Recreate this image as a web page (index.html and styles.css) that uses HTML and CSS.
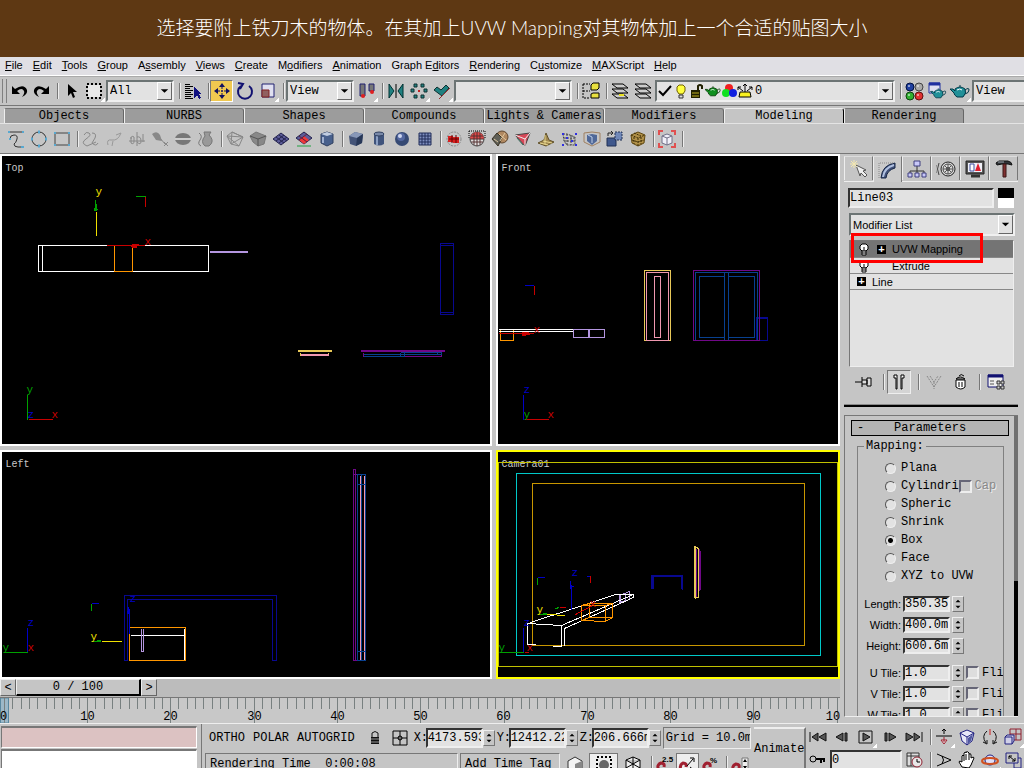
FILE: index.html
```
<!DOCTYPE html>
<html lang="zh-CN">
<head>
    <meta charset="UTF-8">
    <meta name="viewport" content="width=device-width, initial-scale=1.0">
    <title>UVW Mapping</title>
    <link rel="stylesheet" href="styles.css">
</head>
<body>
    <!-- shared symbols -->
    <svg class="defs" width="0" height="0" aria-hidden="true">
        <defs>
            <symbol id="spin" viewBox="0 0 12 16"><path d="M3 6h6L6 3zM3 10h6l-3 3z" fill="#000"/></symbol>
            <symbol id="down" viewBox="0 0 14 14"><path d="M3 5h8l-4 4z" fill="#000"/></symbol>
            <symbol id="bulb" viewBox="0 0 14 14"><path d="M5 9L3 7V4l2-2h4l2 2v3L9 9z" fill="#fff" stroke="#000"/><path d="M5 9h4v4H5zM5 11h4M7 5v3" fill="#fff" stroke="#000"/></symbol>
            <symbol id="teapot" viewBox="0 0 20 20"><path d="M5 8Q10 4 15 8q2 4-2 8H7Q4 14 4 12L0 8h3l2 2z"/><path d="M15 9q4-3 4 0t-4 4M9 5h2" fill="none"/><path d="M7 9q3-2 5 0" stroke="#fff" fill="none"/></symbol>
            <symbol id="knot" viewBox="0 0 20 20"><path d="M3 6q2-4 5-2t-3 6 1 7l9-4M11 4q5 0 3 5l-3 5q4 4 6 0" fill="none"/></symbol>
            <g id="ticks"><path d="M0 0v25M8 0v11M17 0v11M25 0v11M33 0v11M42 0v11M50 0v11M58 0v11M67 0v11M75 0v11"/></g>
        </defs>
    </svg>

    <header class="banner">
        <h1>选择要附上铁刀木的物体。在其加上UVW Mapping对其物体加上一个合适的贴图大小</h1>
    </header>

    <nav class="menubar">
        <a href="#"><u>F</u>ile</a>
        <a href="#"><u>E</u>dit</a>
        <a href="#"><u>T</u>ools</a>
        <a href="#"><u>G</u>roup</a>
        <a href="#">A<u>s</u>sembly</a>
        <a href="#"><u>V</u>iews</a>
        <a href="#"><u>C</u>reate</a>
        <a href="#">M<u>o</u>difiers</a>
        <a href="#"><u>A</u>nimation</a>
        <a href="#">Graph E<u>d</u>itors</a>
        <a href="#"><u>R</u>endering</a>
        <a href="#">C<u>u</u>stomize</a>
        <a href="#"><u>M</u>AXScript</a>
        <a href="#"><u>H</u>elp</a>
    </nav>

    <!-- main toolbar -->
    <div class="toolbar">
        <i class="grip"></i>
        <button class="tool" aria-label="Undo"><svg viewBox="0 0 20 20"><path d="M3 5v8h8l-3-3q5-4 7 0 1 2-2 6 6-3 5-7-3-7-12-1z"/></svg></button>
        <button class="tool" aria-label="Redo"><svg viewBox="0 0 20 20"><path d="M17 5v8H9l3-3q-5-4-7 0-1 2 2 6-6-3-5-7 3-7 12-1z"/></svg></button>
        <i class="sep"></i>
        <button class="tool" aria-label="Select"><svg viewBox="0 0 20 20"><path d="M7 3v12l3-3 2 5 2-1-2-5h4z"/></svg></button>
        <button class="tool fly" aria-label="Region"><svg viewBox="0 0 20 20"><path d="M4 4h12v12H4z" fill="#e8e8e8"/><path d="M3 3h14v14H3z" fill="none" stroke="#000" stroke-width="2" stroke-dasharray="2 2"/></svg></button>
        <span class="drop short"><select aria-label="Filter"><option>All</option></select><svg><use href="#down"/></svg></span>
        <i class="sep"></i>
        <button class="tool" aria-label="Select by name"><svg viewBox="0 0 20 20" shape-rendering="crispEdges"><path d="M2 3h5M2 5h8M2 7h5M2 9h8M2 11h6M2 13h8M2 15h6M2 17h8" stroke="#000"/><path d="M11 6v11l3-3 2 4 2-1-2-4h3z" fill="#101080"/></svg></button>
        <i class="sep"></i>
        <button class="tool on" aria-label="Move"><svg viewBox="0 0 20 20"><path d="M10 2l3 4H7zM10 18l3-4H7zM2 10l4-3v6zM18 10l-4-3v6z" fill="#101060"/><path d="M10 6v8M6 10h8" stroke="#101060" stroke-dasharray="2 1"/></svg></button>
        <button class="tool" aria-label="Rotate"><svg viewBox="0 0 20 20"><path d="M6 5a7 7 0 1 0 8 0M3 2l5 1-3 5" fill="none" stroke="#101070" stroke-width="2"/></svg></button>
        <button class="tool fly" aria-label="Scale"><svg viewBox="0 0 20 20"><path d="M4 3h12v13H4z" fill="#e0e0f0" stroke="#202070"/><path d="M4 9h7v7H4z" fill="#906060" stroke="#802020"/></svg></button>
        <i class="sep"></i>
        <span class="drop short"><select aria-label="Reference coordinate system"><option>View</option></select><svg><use href="#down"/></svg></span>
        <button class="tool fly" aria-label="Pivot"><svg viewBox="0 0 20 20"><path d="M3 3h5v12H3zM12 3h5v7h-5z" fill="#777" stroke="#202070"/><circle cx="6" cy="15" r="2" fill="#e02020"/><circle cx="15" cy="11" r="2" fill="#e02020"/></svg></button>
        <i class="sep"></i>
        <button class="tool" aria-label="Mirror"><svg viewBox="0 0 20 20"><path d="M3 3v14l5-7zM17 3v14l-5-7z" fill="#208080" stroke="#003030"/><path d="M10 3v14" stroke="#000"/></svg></button>
        <button class="tool fly" aria-label="Array"><svg viewBox="0 0 20 20" fill="#208080" stroke="#103030"><path d="M5 3h3v3H5zM12 3h3v3h-3zM2 8h3v3H2zM15 8h3v3h-3zM5 14h3v3H5zM12 14h3v3h-3z"/><path d="M9 9h2v2H9z" fill="#c02020" stroke="none"/></svg></button>
        <button class="tool fly" aria-label="Align"><svg viewBox="0 0 20 20"><path d="M2 9l3-3 4 3 5-5 3 3-7 8z" fill="#208080" stroke="#103030"/><path d="M7 18L18 7" stroke="#903030"/></svg></button>
        <span class="drop sets"><select aria-label="Selection sets"><option></option></select><svg><use href="#down"/></svg></span>
        <i class="sep"></i>
        <button class="tool" aria-label="Named sets"><svg viewBox="0 0 20 20"><path d="M2 3v14h7M2 3h7M2 10h7" fill="none" stroke="#000" stroke-dasharray="2 1"/><path d="M10 4l2-2h6v5l-2 2h-6zM10 13l2-1h6v5h-8z" fill="#e8e040" stroke="#000"/></svg></button>
        <i class="sep"></i>
        <button class="tool" aria-label="Layer manager"><svg viewBox="0 0 20 20"><path d="M2 13h11l5 4H7zM2 8h11l5 4H7zM2 3h11l5 4H7z" fill="#ccc" stroke="#000"/><path d="M9 14h5" stroke="#e8e020" stroke-width="2"/></svg></button>
        <button class="tool" aria-label="Layers"><svg viewBox="0 0 20 20"><path d="M2 13h11l5 4H7zM2 8h11l5 4H7zM2 3h11l5 4H7z" fill="#ccc" stroke="#000"/></svg></button>
        <span class="drop layers">
            <svg class="mini" viewBox="0 0 16 16"><path d="M2 8l4 4 8-9" fill="none" stroke="#000" stroke-width="2"/></svg>
            <svg class="mini" viewBox="0 0 16 16"><path d="M6 11L4 8V4l2-2h4l2 2v4l-2 3z" fill="#ffff40" stroke="#706000"/><path d="M6 12h4v3H6z" fill="#ddd" stroke="#333"/></svg>
            <svg class="mini" viewBox="0 0 16 16"><path d="M2 7h9v8H2z" fill="#202000"/><path d="M9 7V3q2-2 4 0v3" fill="none" stroke="#202000" stroke-width="2"/><path d="M3 10h7M3 13h7" stroke="#c0b020"/></svg>
            <svg class="mini" viewBox="0 0 20 20" fill="#109020" stroke="#003800"><use href="#teapot"/></svg>
            <svg class="mini" viewBox="0 0 16 16"><circle cx="8" cy="5" r="4" fill="#f02020"/><circle cx="5" cy="10" r="4" fill="#10e020"/><circle cx="12" cy="10" r="4" fill="#1020e0"/></svg>
            <svg class="mini" viewBox="0 0 16 16"><path d="M3 9h10l1 5H2z" fill="#f8f020" stroke="#000"/><path d="M8 9V1M6 3l2-2 2 2M6 8L1 4M1 7V4h3M10 8l5-4M15 7V4h-3" fill="none" stroke="#000"/></svg>
            <select aria-label="Layer"><option>0</option></select>
            <svg><use href="#down"/></svg>
        </span>
        <i class="sep"></i>
        <button class="tool" aria-label="Materials"><svg viewBox="0 0 20 20"><circle cx="6" cy="6" r="4" fill="#2040a0" stroke="#001040"/><circle cx="15" cy="6" r="4" fill="#aaa" stroke="#444"/><circle cx="6" cy="15" r="4" fill="#30b030" stroke="#104010"/><circle cx="15" cy="15" r="4" fill="#e03030" stroke="#601010"/><path d="M4 5h2M13 5h2M4 14h2M13 14h2" stroke="#fff"/></svg></button>
        <button class="tool" aria-label="Render scene"><svg viewBox="0 0 20 20"><path d="M2 2h11v10H2z" fill="#e0e0f0" stroke="#2030a0"/><path d="M2 3h11" stroke="#2030a0" stroke-width="3"/><g fill="#209098" stroke="#003848"><use href="#teapot" x="3" y="4" width="17" height="16"/></g></svg></button>
        <button class="tool fly" aria-label="Quick render"><svg viewBox="0 0 20 20" fill="#209098" stroke="#003848"><use href="#teapot"/></svg></button>
        <span class="drop cut"><select aria-label="Render type"><option>View</option></select></span>
    </div>

    <!-- tab panel -->
    <div class="tabs">
        <button>Objects</button><button>NURBS</button><button>Shapes</button><button>Compounds</button><button>Lights &amp; Cameras</button><button>Modifiers</button><button class="active">Modeling</button><button>Rendering</button>
    </div>
    <div class="tools">
        <button class="tool" aria-label="Line"><svg viewBox="0 0 20 20"><path d="M3 3h14M4 10q0-4 4-4t3 4-3 5q0 3 4 3h4" fill="none" stroke="#333"/><path d="M2 3h2M16 3h2M15 18h3M3 10h2" stroke="#58a8d0" stroke-width="2"/></svg></button>
        <button class="tool" aria-label="Circle"><svg viewBox="0 0 20 20"><circle cx="10" cy="10" r="7" fill="none" stroke="#333"/><path d="M9 3h2M9 17h2M2 10h2M16 10h2" stroke="#58a8d0" stroke-width="3"/></svg></button>
        <button class="tool" aria-label="Rectangle"><svg viewBox="0 0 20 20"><path d="M3 4h14v12H3z" fill="none" stroke="#444"/><path d="M2 4h2M16 4h2M2 16h2M16 16h2" stroke="#58a8d0" stroke-width="2"/></svg></button>
        <i class="sep"></i>
        <button class="tool" aria-label="Edit spline"><svg viewBox="0 0 20 20" stroke="#888"><use href="#knot"/></svg></button>
        <button class="tool" aria-label="Sweep"><svg viewBox="0 0 20 20"><path d="M4 16q-2-6 4-5t9-7l-5 2M9 12l-1 5" fill="none" stroke="#999"/></svg></button>
        <button class="tool" aria-label="Cross section"><svg viewBox="0 0 20 20"><path d="M4 8v6q3 2 3-2V8q-3-2-3 2M10 3v14M10 8q4-1 4 4t-4 1M16 5v8M2 12h16" fill="none" stroke="#888"/></svg></button>
        <button class="tool" aria-label="Extrude"><svg viewBox="0 0 20 20"><path d="M2 5q5-4 8 1l2 6-6-1z" fill="#888"/><path d="M10 9l5 6M14 13l4 4M18 13l-4 4" stroke="#888"/></svg></button>
        <button class="tool" aria-label="Capsule"><svg viewBox="0 0 20 20"><ellipse cx="10" cy="10" rx="8" ry="6" fill="#777"/><path d="M2 10h16" stroke="#ccc" stroke-width="2"/></svg></button>
        <button class="tool" aria-label="Lathe"><svg viewBox="0 0 20 20"><path d="M8 3h7l-2 3q5 5 2 9l-2 2H9q-5-4 0-10z" fill="#999" stroke="#777"/><path d="M3 4q4 3 1 7t1 6" fill="none" stroke="#777"/></svg></button>
        <i class="sep"></i>
        <button class="tool" aria-label="Edit mesh"><svg viewBox="0 0 20 20"><path d="M2 7l5-4 11 5-4 9-8-2zM2 7l12 10M7 3L6 15 18 8zM2 7l16 1" fill="none" stroke="#888"/></svg></button>
        <button class="tool" aria-label="Edit poly"><svg viewBox="0 0 20 20"><path d="M2 7l6-4 10 4-2 8-6 2-5-4z" fill="#888" stroke="#777"/><path d="M2 7l8 3 8-3M10 10v7" stroke="#555" fill="none"/></svg></button>
        <button class="tool" aria-label="Edit patch"><svg viewBox="0 0 20 20"><path d="M2 10l8-6 8 6-8 6z" fill="#5c5c98" stroke="#22224c"/><path d="M5 8l8 6M8 6l8 6M5 12l8-6M8 14l8-6" stroke="#22224c"/></svg></button>
        <button class="tool" aria-label="Patch select"><svg viewBox="0 0 20 20"><path d="M2 9l8-6 8 6-8 6z" fill="#5c5c98" stroke="#22224c"/><path d="M10 7l5 4-5 4-5-4z" fill="#f03838"/><path d="M5 7l8 6M5 11l8-6" stroke="#602040"/><path d="M3 17h14" stroke="#20a040"/></svg></button>
        <button class="tool" aria-label="Surface"><svg viewBox="0 0 20 20"><path d="M4 5l6-2 6 2v9l-6 3-6-3z" fill="#48608c" stroke="#304060"/><path d="M4 5l6 2 6-2-6-2z" fill="#c0cce0"/><path d="M6 8v6" stroke="#a0b0d0" stroke-width="2"/></svg></button>
        <i class="sep"></i>
        <button class="tool" aria-label="Box"><svg viewBox="0 0 20 20"><path d="M3 7l6-4 8 2-1 9-6 3-6-2z" fill="#445478"/><path d="M3 7l6-4 8 2-6 4z" fill="#8898b8"/><path d="M11 9l-1 8 6-3 1-9z" fill="#283858"/></svg></button>
        <button class="tool" aria-label="Cylinder"><svg viewBox="0 0 20 20"><path d="M5 5v10q5 3 10 0V5z" fill="#40547c"/><path d="M8 6v10" stroke="#8ca0c4" stroke-width="2"/><ellipse cx="10" cy="5" rx="5" ry="2" fill="#7888a8" stroke="#304060"/></svg></button>
        <button class="tool" aria-label="Sphere"><svg viewBox="0 0 20 20"><circle cx="10" cy="10" r="7" fill="#364a74"/><circle cx="9" cy="8" r="4" fill="#5468a0"/><circle cx="8" cy="7" r="2" fill="#d0d8f0"/></svg></button>
        <button class="tool" aria-label="Plane"><svg viewBox="0 0 20 20"><path d="M4 4h12v12H4z" fill="#8090c0"/><path d="M4 4h12v12H4zM7 4v12M10 4v12M13 4v12M4 7h12M4 10h12M4 13h12" fill="none" stroke="#202c58"/></svg></button>
        <i class="sep"></i>
        <button class="tool" aria-label="MeshSmooth"><svg viewBox="0 0 20 20"><circle cx="10" cy="10" r="7" fill="none" stroke="#888" stroke-dasharray="2 1"/><path d="M4 7h5v1h6v6H9v-1H4z" fill="#d82020"/><path d="M5 10h10M8 6v8M12 6v8" stroke="#600"/></svg></button>
        <button class="tool" aria-label="Slice"><svg viewBox="0 0 20 20"><circle cx="10" cy="10" r="7" fill="#ddd" stroke="#444"/><path d="M3 10a7 7 0 0 1 14 0z" fill="#e04848"/><path d="M4 7h12M3 10h14M4 13h12M7 4v12M10 3v14M13 4v12" stroke="#543030"/><path d="M2 2h16M2 2v7M18 2v7" stroke="#000" stroke-dasharray="1 1"/></svg></button>
        <button class="tool" aria-label="Tessellate"><svg viewBox="0 0 20 20"><circle cx="12" cy="8" r="6" fill="#b08860" stroke="#604830"/><path d="M2 10l5-6 5 5-4 8z" fill="#606058" stroke="#383020"/><path d="M4 10l4 3M9 5l7 6M15 4l-5 8" stroke="#e0c8a0"/></svg></button>
        <button class="tool" aria-label="Face extrude"><svg viewBox="0 0 20 20"><path d="M2 6l15-2-5 13z" fill="#d84858" stroke="#444"/><path d="M2 6l10 4 5-6M12 10v7" fill="none" stroke="#eee"/><path d="M4 9l6 7" stroke="#407060"/></svg></button>
        <button class="tool" aria-label="Displace"><svg viewBox="0 0 20 20"><path d="M2 14l6-3 2-7 3 7 5 2-8 4z" fill="#a08850" stroke="#605028"/><path d="M4 14l8 2M9 6v9M7 12l9 2" stroke="#e8d890"/></svg></button>
        <button class="tool" aria-label="Vertices"><svg viewBox="0 0 20 20"><path d="M4 5h4l8 3v8H8L5 12zM8 5v11M12 6v10M5 12h11M5 9h11" fill="none" stroke="#444" stroke-dasharray="2 1"/><path d="M3 5h2M7 9h2M12 12h2M16 16h2M3 16h2M16 5h2" stroke="#3030e0" stroke-width="2"/></svg></button>
        <button class="tool" aria-label="FFD"><svg viewBox="0 0 20 20"><path d="M2 4l8-1 8 1v9l-8 4-8-4z" fill="none" stroke="#a08060"/><path d="M5 6l5-1 5 1v6l-5 4-5-4z" fill="#506898"/><path d="M6 6l4 2v6" fill="none" stroke="#c0d0e8"/></svg></button>
        <button class="tool" aria-label="Clone"><svg viewBox="0 0 20 20"><path d="M2 9h9v8H2z" fill="#40588c" stroke="#203054"/><path d="M10 3h7v8h-7z" fill="#7088b8" stroke="#203054" stroke-dasharray="2 1"/><path d="M3 7V4h5M6 2l2 2-2 2" fill="none" stroke="#222"/></svg></button>
        <button class="tool" aria-label="Lattice"><svg viewBox="0 0 20 20"><path d="M3 6l7-3 7 3-1 8-6 3-6-3z" fill="#b09048" stroke="#604810"/><path d="M3 6l7 3 7-3M10 9v8M6 4l7 3M6 8v7M13 8v7M4 11l6 2 6-2" fill="none" stroke="#403008" stroke-dasharray="2 1"/></svg></button>
        <i class="sep"></i>
        <button class="tool" aria-label="UVW"><svg viewBox="0 0 20 20"><path d="M5 7l5-2 5 2v7l-5 2-5-2z" fill="#f0f0f8" stroke="#707088"/><path d="M5 7l5 2 5-2M10 9v7" fill="none" stroke="#707088"/><path d="M2 6V2h4M14 2h4v4M2 14v4h4M14 18h4v-4" fill="none" stroke="#e05050" stroke-width="2"/></svg></button>
        <i class="sep"></i>
    </div>

    <div class="workspace">
        <div class="left">
            <main class="views">
                <svg class="view" viewBox="1.5 -0.5 488 288" preserveAspectRatio="xMinYMin meet">
                    <text class="name" x="5" y="14">Top</text>
                    <path class="white" d="M38 89H208V115H38zM42 89V115"/>
                    <path class="orange" d="M114 89V115H132V89"/>
                    <path class="red" d="M106 89H144M131 88h7v1h-7v1h5v1h-5"/>
                    <path class="yellow" d="M96 55V79"/>
                    <path class="green" d="M95 43v11M96 47v7M94 51v3M93 53h4M135 40h10"/>
                    <path class="red" d="M145 40V50"/>
                    <path class="lilac" d="M209 95H247M209 96H247"/>
                    <path class="navy" d="M440 87H453V158H440zM440 89H453M440 156H453"/>
                    <path class="gold" d="M297 194H331M297 195H331M300 196V199M328 196V199"/>
                    <path class="pink" d="M300 198H328M300 199H328"/>
                    <path class="purple" d="M360 194H444M360 195H444M363 196V200H441V196"/>
                    <path class="blue" d="M363 198H441M363 200H404M400 196H441V198M400 196V200M404 196V200M437 196v2"/>
                    <path class="green" d="M27 238V263"/>
                    <path class="red" d="M28 263H52"/>
                    <text class="axis" x="95" y="38" fill="#f0e000">y</text>
                    <text class="axis" x="144" y="88" fill="#c80000">x</text>
                    <text class="axis" x="26" y="236" fill="#00a000">y</text>
                    <text class="axis" x="27" y="261" fill="#0000c8">z</text>
                    <text class="axis" x="51" y="261" fill="#c80000">x</text>
                </svg>
                <svg class="view" viewBox="1.5 -0.5 340 288" preserveAspectRatio="xMinYMin meet">
                    <text class="name" x="5" y="14">Front</text>
                    <path class="orange" d="M4 173H17V184H4z"/>
                    <path class="white" d="M2 173H77M2 175H77"/>
                    <path class="red" d="M2 177H37M25 176h7M25 178h8M25 179h4M38 129V138"/>
                    <path class="bluez" d="M28 129H37"/>
                    <path class="lilac" d="M77 173H108V181H77zM92 173V181M93 173V181"/>
                    <path class="gold" d="M148 114H174V184H148z"/>
                    <path class="pink" d="M150 116H172V184H150zM158 120H164V181H158z"/>
                    <path class="navy" d="M260 161H271V184H260zM260 162H271M261 161V184"/>
                    <path class="blue" d="M199 116H261V184H199zM228 116V184M232 116V184M228 120H203V181H228M232 120H258V181H232"/>
                    <path class="purple" d="M197 184V114H263V184z"/>
                    <path class="bluez" d="M27 238V263"/>
                    <path class="red" d="M28 263H52"/>
                    <text class="axis" x="37" y="176" fill="#c80000">x</text>
                    <text class="axis" x="27" y="236" fill="#0000c8">z</text>
                    <text class="axis" x="27" y="261" fill="#00a000">y</text>
                    <text class="axis" x="51" y="261" fill="#c80000">x</text>
                </svg>
                <svg class="view" viewBox="1.5 1.5 488 225" preserveAspectRatio="xMinYMin meet">
                    <text class="name" x="5" y="16">Left</text>
                    <path class="navy" d="M124 210V145H276V210H272V149H127V210z"/>
                    <path class="orange" d="M129 177H185V210H129z"/>
                    <path class="white" d="M130 185H184M184 178V209"/>
                    <path class="lilac" d="M141 178V201H143V178"/>
                    <path class="bluez" d="M129 158V183M128 156v7M127 160v3M91 153H98"/>
                    <path class="green" d="M91 153V160M91 191H100M96 190h4"/>
                    <path class="yellow" d="M101 191H121"/>
                    <path class="purple" d="M353 19H355V210H353zM353 24H357M353 210H357"/>
                    <path class="pink" d="M360 25V210M364 25V210"/>
                    <path class="blue" d="M357 24H365V210H357zM361 24V210M357 34H365M357 201H365"/>
                    <path class="bluez" d="M27 177V202"/>
                    <path class="green" d="M3 202H27"/>
                    <text class="axis" x="129" y="151" fill="#0000c8">z</text>
                    <text class="axis" x="90" y="189" fill="#f0e000">y</text>
                    <text class="axis" x="27" y="175" fill="#0000c8">z</text>
                    <text class="axis" x="2" y="200" fill="#00a000">y</text>
                    <text class="axis" x="27" y="200" fill="#c80000">x</text>
                </svg>
                <svg class="view current" viewBox="1.5 1.5 340 225" preserveAspectRatio="xMinYMin meet">
                    <text class="name" x="5" y="16">Camera01</text>
                    <path d="M2 12H341V216H2z" stroke="#c0c000"/>
                    <path d="M20 23H324V205H20z" stroke="#00c8c8"/>
                    <path d="M36 33H308V195H36z" stroke="#c89600"/>
                    <path class="navy" d="M155 138V125H186V139M156 138V126H185V138M157 138V126"/>
                    <path class="purple" d="M203 98V140M204 100V139M200 98V146"/>
                    <path class="gold" d="M198 96L202 98V147H198zM199 96V148"/>
                    <path class="lilac" d="M123 152V145L133 141V149zM124 152V145M129 151V143"/>
                    <path class="white" d="M31 194V173L65 175V196H56M31 194h8M34 172L80 157 119 144H137V147L68 178V195M65 175L137 144"/>
                    <path class="orange" d="M85 155H109V171L85 170zM93 153H116V167H93zM85 155l8-2M109 155l7-2M109 171l7-4M85 170l8-3"/>
                    <path class="bluez" d="M75 134V159M74 130v8M73 136h4M41 127H48M90 126h4M27 177V202"/>
                    <path class="green" d="M41 127V134M41 164h9M46 163h4M59 158l4-1M3 202H27"/>
                    <path class="yellow" d="M50 164H60M60 165H68"/>
                    <path class="red" d="M94 125V132M63 157h6M79 164L96 155M28 202h4"/>
                    <text class="axis" x="75" y="125" fill="#0000c8">z</text>
                    <text class="axis" x="93" y="156" fill="#c80000">x</text>
                    <text class="axis" x="40" y="162" fill="#f0e000">y</text>
                    <text class="axis" x="27" y="175" fill="#0000c8">z</text>
                    <text class="axis" x="2" y="200" fill="#00a000">y</text>
                    <text class="axis" x="30" y="200" fill="#c80000">x</text>
                </svg>
            </main>

            <div class="timeslider">
                <button class="step">&lt;</button>
                <button class="thumb">0 / 100</button>
                <button class="step">&gt;</button>
            </div>
            <svg class="ruler" viewBox="-0.5 0 840 25" preserveAspectRatio="xMinYMin slice">
                <path d="M0 0h8v25H0z" fill="#9cb8c8" stroke="#5888a0"/>
                <g stroke="#788080" shape-rendering="crispEdges">
                    <use href="#ticks" x="4"/><use href="#ticks" x="87"/><use href="#ticks" x="170"/><use href="#ticks" x="254"/><use href="#ticks" x="337"/><use href="#ticks" x="420"/><use href="#ticks" x="504"/><use href="#ticks" x="587"/><use href="#ticks" x="670"/><use href="#ticks" x="753"/><use href="#ticks" x="837"/>
                </g>
                <text x="3" y="22">0</text><text x="87" y="22">10</text><text x="170" y="22">20</text><text x="254" y="22">30</text><text x="337" y="22">40</text><text x="420" y="22">50</text><text x="503" y="22">60</text><text x="587" y="22">70</text><text x="670" y="22">80</text><text x="753" y="22">90</text><text x="836" y="22">100</text>
            </svg>
        </div>

        <!-- command panel -->
        <aside class="panel">
            <div class="panel-tabs">
                <button aria-label="Create"><svg viewBox="0 0 20 20"><path d="M7 6l10 5-3 1 4 4-2 2-4-4-1 3z" fill="#eee" stroke="#555"/><path d="M5 1v8M1 5h8M2 2l6 6M8 2L2 8" stroke="#f4e8b0"/></svg></button>
                <button class="active" aria-label="Modify"><svg viewBox="0 0 20 20"><path d="M3 18Q4 5 17 3v5q-8 2-9 10z" fill="#405078" stroke="#182848"/><path d="M5 17Q6 8 16 5" fill="none" stroke="#b0c0e0" stroke-width="2"/><path d="M1 18V3h15" fill="none" stroke="#888" stroke-dasharray="1 1"/></svg></button>
                <button aria-label="Hierarchy"><svg viewBox="0 0 20 20"><path d="M10 7v5M3 14v-2h14v2M10 12v2" fill="none" stroke="#333"/><path d="M7 2h6v5H7zM1 14h4v4H1zM8 14h4v4H8zM15 14h4v4h-4z" fill="#c8c8f8" stroke="#404080"/></svg></button>
                <button aria-label="Motion"><svg viewBox="0 0 20 20"><circle cx="12" cy="10" r="7" fill="#ddd" stroke="#222"/><circle cx="12" cy="10" r="5" fill="none" stroke="#444"/><circle cx="12" cy="10" r="2" fill="#444"/><path d="M12 5v10M7 10h10M9 7l6 6M15 7l-6 6" stroke="#555"/><path d="M3 4q-3 6 0 12M0 6q-1 4 0 8" fill="none" stroke="#444"/></svg></button>
                <button aria-label="Display"><svg viewBox="0 0 20 20"><path d="M1 2h18v13H1z" fill="#555" stroke="#222"/><path d="M3 4h14v9H3z" fill="#f0f0f8"/><path d="M5 5h4v7H5z" fill="#fff" stroke="#4050a0"/><path d="M10 12l3-8 3 8z" fill="#e02030"/><path d="M6 17h9" stroke="#333" stroke-width="3"/></svg></button>
                <button aria-label="Utilities"><svg viewBox="0 0 20 20"><path d="M2 4l3-2h9q4 1 4 4l-4-1H8L3 6z" fill="#303438" stroke="#111"/><path d="M9 5h3v13H9z" fill="#803030" stroke="#3a1818"/><path d="M4 3h6" stroke="#a0a8b0"/></svg></button>
            </div>
            <div class="object-name">
                <input type="text" value="Line03" aria-label="Object name">
                <button class="swatch" aria-label="Object color"></button>
            </div>
            <span class="drop modifiers"><select aria-label="Modifier list"><option>Modifier List</option></select><svg><use href="#down"/></svg></span>
            <div class="stack-wrap">
                <ul class="stack">
                    <li class="selected"><svg class="lamp"><use href="#bulb"/></svg><b>+</b><span>UVW Mapping</span></li>
                    <li><svg class="lamp"><use href="#bulb"/></svg><b class="none"></b><span>Extrude</span></li>
                    <li class="base"><b>+</b><span>Line</span></li>
                </ul>
                <i class="highlight"></i>
            </div>
            <div class="stack-tools">
                <button aria-label="Pin stack"><svg viewBox="0 0 20 20"><path d="M1 10h7M8 5v10M8 8h5v4H8M13 6h4v8h-4z" fill="#ddd" stroke="#000"/></svg></button>
                <i class="sep"></i>
                <button class="pressed" aria-label="Show end result"><svg viewBox="0 0 20 20"><path d="M5 3h3v14H7V6H5zM15 3h-3v14h1V6h2z" fill="#fff" stroke="#000"/></svg></button>
                <i class="sep"></i>
                <button aria-label="Make unique"><svg viewBox="0 0 20 20"><path d="M3 4l7 11 7-11M6 4l4 6 4-6M10 10v7" fill="none" stroke="#888" stroke-dasharray="2 1"/></svg></button>
                <button aria-label="Remove modifier"><svg viewBox="0 0 20 20"><path d="M5 8h9v7q-4 4-9 0z" fill="#fff" stroke="#000"/><path d="M5 7q4-4 9 0zM8 4q2-3 5 0M8 10v5M11 10v5" fill="none" stroke="#000"/></svg></button>
                <i class="sep"></i>
                <button aria-label="Configure"><svg viewBox="0 0 20 20"><path d="M2 3h15v12H2z" fill="#eee" stroke="#101070"/><path d="M2 4h15" stroke="#101070" stroke-width="3"/><path d="M4 9h4M4 12h4" stroke="#555"/><path d="M11 9h3v3h-3zM15 9h3v3h-3zM11 14h3v3h-3zM15 14h3v3h-3z" fill="#ccc" stroke="#333"/></svg></button>
            </div>
            <hr>
            <div class="rollout-area">
                <div class="rollout">
                    <button class="rollout-head"><span>-</span><span class="title">Parameters</span></button>
                    <fieldset>
                        <legend>Mapping:</legend>
                        <div class="radios">
                            <div><label><input type="radio" name="map">Plana</label></div>
                            <div><label><input type="radio" name="map">Cylindri</label><label class="cap"><input type="checkbox" disabled>Cap</label></div>
                            <div><label><input type="radio" name="map">Spheric</label></div>
                            <div><label><input type="radio" name="map">Shrink</label></div>
                            <div><label><input type="radio" name="map" checked>Box</label></div>
                            <div><label><input type="radio" name="map">Face</label></div>
                            <div><label><input type="radio" name="map">XYZ to UVW</label></div>
                        </div>
                        <div class="sizes">
                            <div class="row"><label for="length">Length:</label><input type="text" id="length" value="350.35"><svg class="spin"><use href="#spin"/></svg></div>
                            <div class="row"><label for="width">Width:</label><input type="text" id="width" value="400.0m"><svg class="spin"><use href="#spin"/></svg></div>
                            <div class="row"><label for="height">Height:</label><input type="text" id="height" value="600.6m"><svg class="spin"><use href="#spin"/></svg></div>
                        </div>
                        <div class="tiles">
                            <div class="row"><label for="utile">U Tile:</label><input type="text" id="utile" value="1.0"><svg class="spin"><use href="#spin"/></svg><label class="flip"><input type="checkbox">Fli</label></div>
                            <div class="row"><label for="vtile">V Tile:</label><input type="text" id="vtile" value="1.0"><svg class="spin"><use href="#spin"/></svg><label class="flip"><input type="checkbox">Fli</label></div>
                            <div class="row"><label for="wtile">W Tile:</label><input type="text" id="wtile" value="1.0"><svg class="spin"><use href="#spin"/></svg><label class="flip"><input type="checkbox">Fli</label></div>
                        </div>
                    </fieldset>
                </div>
                <i class="scroll"></i>
            </div>
        </aside>
    </div>

    <!-- status bar -->
    <footer class="status">
        <div class="listener">
            <input type="text" class="macro" aria-label="Macro recorder">
            <input type="text" aria-label="Listener">
        </div>
        <div class="info">
            <div class="line">
                <span class="modes"><button>ORTHO</button><button>POLAR</button><button>AUTOGRID</button></span>
                <button class="tool" aria-label="Lock"><svg viewBox="0 0 20 20"><path d="M6 9h8v7H6z" fill="#111"/><path d="M7 9V5q3-3 6 0v4" fill="none" stroke="#111"/><path d="M6 11h8M6 14h8" stroke="#999"/></svg></button>
                <button class="tool" aria-label="Absolute mode"><svg viewBox="0 0 20 20"><path d="M3 3h14v14H3zM10 3v14M3 10h14" fill="none" stroke="#000"/><circle cx="10" cy="10" r="2" fill="#666" stroke="#000"/></svg></button>
                <span class="coord"><label for="cx">X:</label><input type="text" id="cx" value="4173.593"><svg class="spin"><use href="#spin"/></svg></span>
                <span class="coord"><label for="cy">Y:</label><input type="text" id="cy" value="12412.22"><svg class="spin"><use href="#spin"/></svg></span>
                <span class="coord"><label for="cz">Z:</label><input type="text" id="cz" value="206.666m"><svg class="spin"><use href="#spin"/></svg></span>
                <span class="well grid-size">Grid = 10.0m</span>
            </div>
            <div class="line second">
                <span class="well time">Rendering Time  0:00:08</span>
                <span class="well tag">Add Time Tag</span>
                <button class="tool wide" aria-label="Shaded"><svg viewBox="0 0 20 20"><path d="M3 7l7-4 7 4v7l-7 4-7-4z" fill="#f4f4f4" stroke="#333"/><path d="M10 10l7-3v7l-7 4z" fill="#888"/></svg></button>
                <button class="tool wide lit" aria-label="Crossing"><svg viewBox="0 0 20 20"><path d="M3 3h14v14H3z" fill="none" stroke="#000" stroke-width="2" stroke-dasharray="2 2"/><circle cx="10" cy="11" r="5" fill="#666"/></svg></button>
                <button class="tool wide" aria-label="Wire"><svg viewBox="0 0 20 20"><path d="M3 6l7-3 7 3v8l-7 4-7-4zM3 6l7 4 7-4M10 3v15M3 14l7-4 7 4" fill="#eee" stroke="#000"/></svg></button>
                <i class="sep"></i>
                <button class="tool" aria-label="Snap"><svg viewBox="0 0 20 20"><path d="M4 16q-3-5 2-7 4 0 3 4" fill="none" stroke="#a02030" stroke-width="3"/><text x="7" y="8">2.5</text></svg></button>
                <button class="tool lit" aria-label="Angle snap"><svg viewBox="0 0 20 20"><path d="M3 16q-2-5 2-7 4 0 3 4" fill="none" stroke="#a02030" stroke-width="3"/><path d="M9 12l6-7M12 4h4v4M12 13l5 4" fill="none" stroke="#000"/></svg></button>
                <button class="tool" aria-label="Percent snap"><svg viewBox="0 0 20 20"><path d="M4 16q-3-5 2-7 4 0 3 4" fill="none" stroke="#a02030" stroke-width="3"/><text x="9" y="9">%</text></svg></button>
                <i class="sep"></i>
                <button class="tool" aria-label="Spinner snap"><svg viewBox="0 0 20 20"><path d="M4 17q-3-5 2-7 4 0 3 4" fill="none" stroke="#a02030" stroke-width="3"/><path d="M12 4h6v12h-6z" fill="#eee" stroke="#777"/><path d="M13 8h4l-2-3zM13 12h4l-2 3z"/></svg></button>
            </div>
        </div>
        <button class="animate">Animate</button>
        <div class="playback">
            <button class="tool" aria-label="Go to start"><svg viewBox="0 0 20 20" fill="#555" stroke="#111"><path d="M2 5v10M10 6v8l-6-4zM18 6v8l-7-4z"/></svg></button>
            <button class="tool" aria-label="Previous frame"><svg viewBox="0 0 20 20" fill="#555" stroke="#111"><path d="M11 6v8l-7-4zM13 6h2v8h-2z"/></svg></button>
            <button class="tool fly" aria-label="Play"><svg viewBox="0 0 20 20" fill="#555" stroke="#111"><path d="M3 4h13v12H3z" fill="none"/><path d="M7 6v8l7-4z"/></svg></button>
            <button class="tool" aria-label="Next frame"><svg viewBox="0 0 20 20" fill="#555" stroke="#111"><path d="M9 6v8l7-4zM5 6h2v8H5z"/></svg></button>
            <button class="tool" aria-label="Go to end"><svg viewBox="0 0 20 20" fill="#555" stroke="#111"><path d="M18 5v10M2 6v8l7-4zM10 6v8l6-4z"/></svg></button>
            <i class="sep"></i>
            <button class="tool fly" aria-label="Dolly"><svg viewBox="0 0 20 20"><path d="M2 9h16M10 2v5M8 4l2-2 2 2" fill="none" stroke="#000"/><path d="M10 10v5M7 13l3 4 3-4z" fill="#eee" stroke="#a02030"/></svg></button>
            <button class="tool" aria-label="Perspective"><svg viewBox="0 0 20 20"><path d="M3 6l7-3 7 3-2 8-5 4-5-4z" fill="#e8e8f8" stroke="#202080"/><path d="M3 6l7 4 7-4M10 10v8" fill="none" stroke="#202080"/><path d="M11 11l5-4-2 7-3 3z" fill="#5058a0"/></svg></button>
            <button class="tool" aria-label="Roll camera"><svg viewBox="0 0 20 20"><path d="M7 4q-6 5-1 12M13 4q6 5 1 12M3 15l4 2v-4M17 15l-4 2v-4" fill="none" stroke="#111"/><path d="M10 2v6" stroke="#d02020"/></svg></button>
            <button class="tool fly" aria-label="Zoom extents all"><svg viewBox="0 0 20 20"><path d="M7 2h11v11H7zM13 2v11M7 7h11" fill="none" stroke="#902030"/><path d="M2 10l2-2h7v6l-2 3H2zM2 10h7v7" fill="#d0d0e8" stroke="#202080"/></svg></button>
            <button class="tool" aria-label="Key mode"><svg viewBox="0 0 20 20"><circle cx="5" cy="9" r="3" fill="none" stroke="#000"/><path d="M8 9h9M13 9v4M16 9v3" stroke="#000" stroke-width="2"/></svg></button>
            <input type="text" value="0" aria-label="Current frame">
            <button class="tool" aria-label="Time configuration"><svg viewBox="0 0 20 20"><path d="M3 3h12v13H3zM3 6h12M7 3v13" fill="#ddd" stroke="#333"/><circle cx="13" cy="12" r="5" fill="#e8e8e8" stroke="#902030"/><path d="M13 9v3h3" fill="none" stroke="#000"/></svg></button>
            <i class="sep"></i>
            <button class="tool" aria-label="Field of view"><svg viewBox="0 0 20 20"><path d="M3 4l14 6-14 6M8 6q3 4 0 8" fill="none" stroke="#000"/></svg></button>
            <button class="tool" aria-label="Truck"><svg viewBox="0 0 20 20"><path d="M5 17l-3-5q0-2 3 0V6q1-2 2 0V3q2-2 2 0V2q2-1 3 1v1q2-1 2 1v3q3-2 3 0l-3 7-2 3z" fill="#fff" stroke="#000"/><path d="M7 6v5M9 4v6M12 4v6" stroke="#000"/></svg></button>
            <button class="tool fly" aria-label="Orbit"><svg viewBox="0 0 20 20"><circle cx="10" cy="10" r="5" fill="#e0e0f8" stroke="#202080"/><ellipse cx="10" cy="11" rx="8" ry="3" fill="none" stroke="#d05020" stroke-width="2"/></svg></button>
            <button class="tool" aria-label="Maximize"><svg viewBox="0 0 20 20"><path d="M3 3h12v10H3zM11 13v5h7V8h-3" fill="none" stroke="#202080"/><path d="M6 6l6 5M6 9V6h3M12 8v3H9" fill="none" stroke="#000"/></svg></button>
        </div>
    </footer>
</body>
</html>
```
FILE: styles.css
```
* {
    box-sizing: border-box;
}

body {
    margin: 0;
    height: 100vh;
    display: flex;
    flex-direction: column;
    overflow: hidden;
    background-color: #c5c5c5;
    color: #000;
    font-family: "Liberation Mono", "Courier New", monospace;
    font-size: 12px;
}

button, input, select {
    margin: 0;
    padding: 0;
    border: none;
    border-radius: 0;
    background: none;
    color: #000;
    font: inherit;
}

select, input[type="radio"], input[type="checkbox"] {
    appearance: none;
}

.defs {
    display: block;
    flex: none;
}

/* title strip */
.banner {
    flex: none;
    height: 57px;
    display: flex;
    align-items: center;
    justify-content: center;
    padding-bottom: 4px;
    background-color: #5e3813;
    color: #fff;
}

.banner h1 {
    margin: 0;
    font: 400 19px Lato, "Noto Sans CJK SC", sans-serif;
    font-weight: 300;
    white-space: nowrap;
}

.menubar {
    flex: none;
    height: 19px;
    display: flex;
    align-items: center;
    gap: 10px;
    padding: 0 5px 2px;
    background-color: #e0dfe4;
    border-bottom: 1px solid #fff;
    font: 11px "Liberation Sans", Arial, sans-serif;
}

.menubar a {
    color: #000;
    text-decoration: none;
    white-space: nowrap;
}

/* toolbars */
.toolbar {
    flex: none;
    height: 30px;
    display: flex;
    align-items: center;
    padding-left: 2px;
    border-top: 1px solid #aaa;
    border-bottom: 1px solid #777;
}

.grip {
    flex: none;
    width: 5px;
    height: 24px;
    border-left: 1px solid #808080;
    border-right: 1px solid #808080;
}

.sep {
    flex: none;
    width: 6px;
    height: 16px;
    border-right: 1px solid #eee;
    box-shadow: inset -1px 0 #777;
}

.tool {
    flex: none;
    width: 23px;
    height: 22px;
    display: flex;
    align-items: center;
    justify-content: center;
}

.tool svg {
    flex: none;
    width: 20px;
    height: 20px;
}

.tool text {
    font: bold 8px "Liberation Sans", Arial, sans-serif;
}

/* small corner mark of a flyout */
.fly {
    background: linear-gradient(135deg, transparent 50%, #fff 50%) right bottom / 4px 4px no-repeat;
}

.tool.on {
    background-color: #f0c850;
    border: 1px solid #fff;
    border-top-color: #777;
    border-left-color: #777;
}

.drop {
    flex: none;
    height: 22px;
    display: flex;
    align-items: center;
    margin: 0 1px;
    border: 2px solid #f0f0f0;
    border-top-color: #6c7474;
    border-left-color: #6c7474;
    background-color: #e2e2e2;
}

.drop select {
    flex: 1;
    min-width: 0;
    padding-left: 2px;
}

.drop > svg:last-child {
    flex: none;
    width: 15px;
    height: 18px;
    border: 1px solid #666;
    border-top-color: #fff;
    border-left-color: #fff;
    background-color: #e2e2e2;
}

.short {
    width: 68px;
}

.sets {
    width: 118px;
}

.layers {
    flex: 1;
}

.layers select {
    padding-left: 2px;
}

.mini {
    flex: none;
    width: 16px;
    height: 16px;
}

.cut {
    width: 52px;
    border-right: none;
    margin-right: 0;
}

.tabs {
    flex: none;
    height: 18px;
    display: flex;
    align-items: flex-end;
    padding: 0 4px;
    border-bottom: 1px solid #e4e4e4;
}

.tabs button {
    width: 120px;
    height: 15px;
    line-height: 15px;
    white-space: nowrap;
    background-color: #9c9c9c;
    border-top: 1px solid #777;
    border-left: 1px solid #eee;
    border-right: 1px solid #666;
    border-radius: 2px 3px 0 0;
}

.tabs .active {
    background-color: #c5c5c5;
    border-top-color: #eee;
    border-right-color: #000;
}

.tools {
    flex: none;
    height: 30px;
    display: flex;
    align-items: center;
    padding-left: 4px;
    border-bottom: 1px solid #777;
}

/* viewports */
.workspace {
    flex: 1;
    min-height: 0;
    display: grid;
    grid-template-columns: minmax(0, 1fr) 184px;
    border-bottom: 1px solid #eee;
}

.left {
    display: flex;
    flex-direction: column;
    min-height: 0;
}

.views {
    flex: 1;
    min-height: 0;
    display: grid;
    grid-template-columns: minmax(0, 492fr) minmax(0, 344fr);
    grid-template-rows: minmax(0, 292fr) minmax(0, 229fr);
    gap: 4px;
}

.view {
    width: 100%;
    height: 100%;
    border: 2px solid #fff;
    background-color: #000;
}

.view.current {
    border-color: #ffff00;
}

.view path {
    fill: none;
    shape-rendering: crispEdges;
}

.view .name {
    font-size: 10px;
    fill: #c8c8c8;
}

.view .axis {
    font-size: 11px;
}

.white { stroke: #fff; }
.orange { stroke: #ff9600; }
.red { stroke: #c80000; }
.yellow { stroke: #f0e000; }
.green { stroke: #00a000; }
.lilac { stroke: #b496e0; }
.navy { stroke: #080890; }
.bluez { stroke: #0000c8; }
.blue { stroke: #084090; }
.purple { stroke: #700888; }
.gold { stroke: #e8c858; }
.pink { stroke: #f098b0; }

/* time slider and track bar */
.timeslider {
    flex: none;
    height: 18px;
    display: flex;
    background-color: #bcbcbc;
}

.timeslider button {
    height: 17px;
    line-height: 14px;
    border: 1px solid #666;
    border-top-color: #eee;
    border-left-color: #eee;
    background-color: #c5c5c5;
}

.timeslider .step {
    width: 16px;
}

.timeslider .thumb {
    width: 125px;
    border-right: 2px solid #000;
    border-bottom: 2px solid #000;
}

.ruler {
    flex: none;
    width: 100%;
    height: 26px;
    border-top: 1px solid #777;
    background-color: #c8c8c8;
}

.ruler text {
    font-size: 12px;
    text-anchor: middle;
}

/* command panel */
.panel {
    display: flex;
    flex-direction: column;
    min-height: 0;
    padding: 2px 6px 6px 4px;
}

.panel-tabs {
    flex: none;
    height: 26px;
    display: flex;
    border-bottom: 1px solid #eee;
}

.panel-tabs button {
    width: 29px;
    height: 24px;
    display: flex;
    align-items: center;
    justify-content: center;
    border-top: 1px solid #ddd;
    border-left: 1px solid #eee;
    border-right: 1px solid #777;
}

.panel-tabs .active {
    height: 26px;
    background-color: #cacaca;
}

.panel-tabs svg {
    width: 20px;
    height: 20px;
}

.object-name {
    flex: none;
    display: flex;
    gap: 4px;
    margin: 6px 4px 5px;
}

.object-name input, .row > input, .coord input, .playback input {
    min-width: 0;
    border: 2px solid #eee;
    border-top-color: #333;
    border-left-color: #333;
    background-color: #e2e2e2;
}

.object-name input {
    flex: 1;
    height: 20px;
}

.swatch {
    width: 16px;
    height: 20px;
    background: linear-gradient(#000 50%, #fff 50%);
}

.modifiers {
    margin: 0 3px 0 5px;
    height: 23px;
    font: 11px "Liberation Sans", Arial, sans-serif;
}

.drop.modifiers > svg:last-child {
    height: 19px;
}

.stack-wrap {
    flex: none;
    position: relative;
    margin: 4px 4px 0 5px;
}

.stack {
    height: 127px;
    margin: 0;
    padding: 0;
    list-style: none;
    border: 1px solid #eee;
    border-top-color: #777;
    border-left-color: #777;
    background-color: #e2e2e2;
    font: 11px "Liberation Sans", Arial, sans-serif;
}

.stack li {
    height: 16px;
    display: flex;
    align-items: center;
    gap: 6px;
    padding-left: 7px;
    border-bottom: 1px solid #888;
}

.stack .selected {
    height: 17px;
    background-color: #747474;
}

.stack b {
    width: 9px;
    height: 9px;
    background-color: #000;
    color: #fff;
    line-height: 9px;
    text-align: center;
}

.stack .none {
    background: none;
}

.lamp {
    width: 14px;
    height: 14px;
}

/* red frame drawn over the selected modifier */
.highlight {
    position: absolute;
    left: 2px;
    top: -7px;
    width: 132px;
    height: 30px;
    border: 3px solid #ff0000;
}

.stack-tools {
    flex: none;
    height: 30px;
    display: flex;
    align-items: center;
    justify-content: space-between;
    padding: 0 10px 0 8px;
}

.stack-tools button {
    width: 24px;
    height: 24px;
    display: flex;
    align-items: center;
    justify-content: center;
}

.stack-tools svg {
    width: 20px;
    height: 20px;
}

.stack-tools .pressed {
    border: 1px solid #eee;
    border-top-color: #777;
    border-left-color: #777;
    background-color: #d4d4d4;
}

.panel hr {
    flex: none;
    width: 100%;
    height: 3px;
    margin: 7px 0 8px;
    border: none;
    border-bottom: 2px solid #000;
    border-top: 1px solid #888;
}

.rollout-area {
    flex: 1;
    min-height: 0;
    display: flex;
    overflow: hidden;
    border-top: 1px solid #777;
    border-left: 1px solid #777;
    border-bottom: 1px solid #eee;
}

.rollout {
    flex: 1;
    min-width: 0;
    padding: 4px 5px 0 6px;
}

.scroll {
    width: 4px;
    background: linear-gradient(#707070 55%, #000 55%);
}

.rollout-head {
    width: 100%;
    height: 16px;
    display: flex;
    align-items: center;
    padding: 0 12px 0 5px;
    border: 1px solid #000;
    background-color: #b4b4b4;
}

.rollout-head .title {
    flex: 1;
}

.rollout fieldset {
    min-width: 0;
    margin: 3px 5px 0 6px;
    padding: 6px 0 10px;
    border: 1px solid #808080;
    overflow: hidden;
}

.rollout legend {
    margin-left: 6px;
    padding: 0 2px;
    line-height: 14px;
}

.radios {
    padding-left: 27px;
}

.radios div {
    height: 18px;
    display: flex;
    align-items: center;
}

.radios label {
    display: flex;
    align-items: center;
    gap: 5px;
    white-space: nowrap;
}

input[type="radio"] {
    width: 11px;
    height: 11px;
    border: 1px solid #eee;
    border-top-color: #555;
    border-left-color: #555;
    border-radius: 50%;
    background-color: #e2e2e2;
}

input[type="radio"]:checked {
    background: radial-gradient(circle, #000 2px, #e2e2e2 3px);
}

input[type="checkbox"] {
    flex: none;
    width: 13px;
    height: 13px;
    border: 2px solid #eee;
    border-top-color: #667;
    border-left-color: #667;
    background-color: #ddd;
}

.radios .cap {
    gap: 3px;
    color: #888;
    text-shadow: 1px 1px #eee;
}

.cap input {
    background-color: #c5c5c5;
}

.sizes {
    margin-top: 8px;
}

.tiles {
    margin-top: 6px;
}

.row {
    height: 21px;
    display: flex;
    align-items: center;
    gap: 2px;
}

.row > label:first-child {
    flex: none;
    width: 43px;
    text-align: right;
    font: 11px "Liberation Sans", Arial, sans-serif;
}

.row > input {
    flex: none;
    width: 47px;
    height: 16px;
}

.spin {
    flex: none;
    width: 12px;
    height: 16px;
    border: 1px solid #777;
    border-top-color: #eee;
    border-left-color: #eee;
}

.flip {
    display: flex;
    align-items: center;
    gap: 3px;
    white-space: nowrap;
}

/* status bar */
.status {
    flex: none;
    height: 44px;
    display: flex;
    overflow: hidden;
}

.listener {
    flex: none;
    width: 202px;
    display: flex;
    flex-direction: column;
    gap: 1px;
    padding: 2px 4px 0 1px;
    border-right: 1px solid #777;
}

.listener input {
    flex: none;
    height: 22px;
    border: 1px solid #fff;
    border-top: 2px solid #777;
    border-left-color: #777;
    background-color: #fff;
}

.listener .macro {
    background-color: #dcc2c2;
}

.info {
    flex: 1;
    min-width: 0;
    padding: 0 3px;
}

.line {
    height: 28px;
    display: flex;
    align-items: center;
    gap: 2px;
}

.line.second {
    height: 24px;
    gap: 0;
}

.modes {
    display: flex;
    gap: 8px;
    padding: 0 7px 0 4px;
}

.coord {
    flex: none;
    display: flex;
    align-items: center;
}

.coord label {
    width: 12px;
}

.coord input {
    width: 57px;
    height: 20px;
}

.well {
    overflow: hidden;
    border: 1px solid #eee;
    border-top-color: #777;
    border-left-color: #777;
    white-space: pre;
    line-height: 20px;
    padding-left: 4px;
}

.grid-size {
    flex: 1;
    min-width: 0;
    padding-left: 2px;
}

.time {
    flex: 1;
    min-width: 0;
    margin-right: 2px;
}

.tag {
    flex: none;
    width: 100px;
}

.tool.wide {
    width: 29px;
}

.tool.lit {
    background-color: #eee;
    border: 1px solid #777;
}

.animate {
    flex: none;
    width: 52px;
    margin-top: 3px;
    border-top: 2px solid #eee;
    border-right: 2px solid #777;
}

.playback {
    flex: none;
    display: grid;
    grid-template-columns: repeat(5, 24px) 6px repeat(4, 23px);
    grid-template-rows: 26px 20px;
    align-items: center;
}

.playback input {
    grid-column: span 3;
    width: 100%;
    height: 20px;
}
```
